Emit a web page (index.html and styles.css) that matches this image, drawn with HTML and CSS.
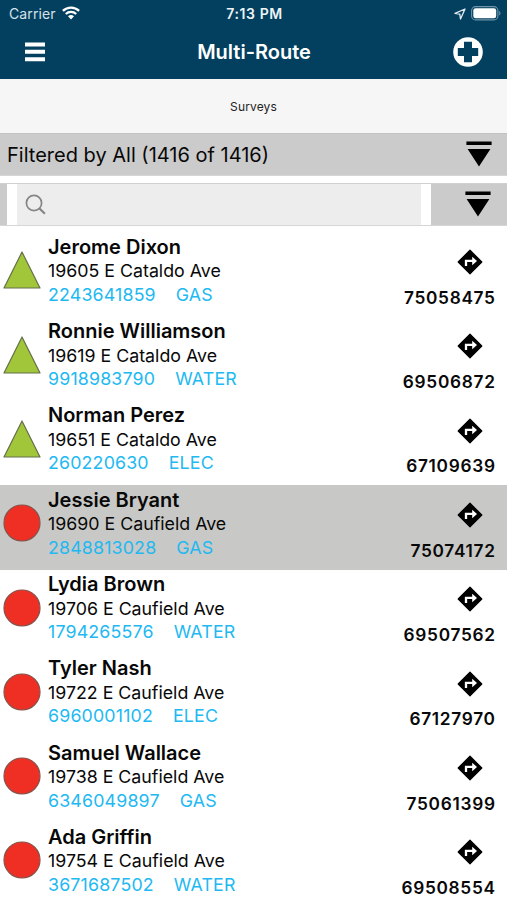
FILE: index.html
```
<!DOCTYPE html>
<html lang="en">
<head>
<meta charset="utf-8">
<title>Multi-Route</title>
<link rel="stylesheet" href="styles.css">
</head>
<body>
<svg class="defs" width="0" height="0" aria-hidden="true">
  <symbol id="triangle" viewBox="0 0 38 38"><path d="M19 1 37 37H1Z" fill="#a1c63a" stroke="#65704b" stroke-width="1.2" stroke-linejoin="round"/></symbol>
  <symbol id="circle" viewBox="0 0 38 38"><circle cx="19" cy="19" r="18" fill="#ef2f23" stroke="#87524c" stroke-width="1.2"/></symbol>
  <symbol id="route" viewBox="0 0 26 26"><path d="M13 1.2 24.800 13 13 24.800 1.200 13Z" fill="#000" stroke="#000" stroke-width="1.2" stroke-linejoin="round"/><path d="M9 17V11.800H16" fill="none" stroke="#fff" stroke-width="2.300"/><path d="M15.200 7.800 20 12l-4.800 4.200Z" fill="#fff"/></symbol>
  <symbol id="drop" viewBox="0 0 26 26"><path d="M.4.5h25.200v3.600H.4ZM1.600 8h22.800L13 25.400Z" fill="#000"/></symbol>
</svg>
<header class="top">
  <div class="status">
    <div class="carrier"><span>Carrier</span>
      <svg width="18" height="14" viewBox="0 0 18 14"><g fill="none" stroke="#fff" stroke-width="2.300"><path d="M.9 4.900a11.600 11.600 0 0 1 16.200 0"/><path d="M3.800 8a7.500 7.500 0 0 1 10.400 0"/></g><path d="M6 10.300a4.400 4.400 0 0 1 6 0L9 13.600Z" fill="#fff"/></svg>
    </div>
    <time>7:13 PM</time>
    <div class="power">
      <svg width="12" height="12" viewBox="0 0 12 12"><path d="M11 1 1 5.400l4.800.8.700 4.800Z" fill="none" stroke="#e4edf2" stroke-width="1.300" stroke-linejoin="round"/></svg>
      <svg width="30" height="15" viewBox="0 0 30 15"><rect x=".6" y=".6" width="26.300" height="13.300" rx="4" fill="none" stroke="#6f94a8" stroke-width="1.100"/><rect x="2.300" y="2.300" width="22.900" height="9.900" rx="2.300" fill="#fff"/><path d="M28.200 5v4.600c1.700-.7 1.700-3.900 0-4.600Z" fill="#6f94a8"/></svg>
    </div>
  </div>
  <div class="nav">
    <svg width="20" height="20" viewBox="0 0 20 20"><path d="M0 .5h20v4H0Zm0 7.300h20v4H0Zm0 7.400h20v4H0Z" fill="#fff"/></svg>
    <h1>Multi-Route</h1>
    <svg width="30" height="30" viewBox="0 0 30 30"><circle cx="15" cy="15" r="14.800" fill="#fff"/><path d="M11 4.800h8V11h6.200v8H19v6.200h-8V19H4.800v-8H11Z" fill="#03405f"/></svg>
  </div>
</header>
<div class="tab">Surveys</div>
<div class="filter"><span>Filtered by All (1416 of 1416)</span><svg width="26" height="26"><use href="#drop"/></svg></div>
<div class="search">
  <div class="field"><svg width="22" height="22" viewBox="0 0 22 22" fill="none" stroke="#858585"><circle cx="9" cy="9" r="7.600" stroke-width="1.700"/><path d="m14.500 14.500 5.400 5.200" stroke-width="2.200"/></svg></div>
  <svg width="26" height="26"><use href="#drop"/></svg>
</div>
<main>
  <article class="row"><svg class="mark"><use href="#triangle"/></svg><div class="info"><h2>Jerome Dixon</h2><p>19605 E Cataldo Ave</p><div class="meter"><span>2243641859</span><span>GAS</span></div></div><div class="side"><svg class="route"><use href="#route"/></svg><b>75058475</b></div></article>
  <article class="row"><svg class="mark"><use href="#triangle"/></svg><div class="info"><h2>Ronnie Williamson</h2><p>19619 E Cataldo Ave</p><div class="meter"><span>9918983790</span><span>WATER</span></div></div><div class="side"><svg class="route"><use href="#route"/></svg><b>69506872</b></div></article>
  <article class="row"><svg class="mark"><use href="#triangle"/></svg><div class="info"><h2>Norman Perez</h2><p>19651 E Cataldo Ave</p><div class="meter"><span>260220630</span><span>ELEC</span></div></div><div class="side"><svg class="route"><use href="#route"/></svg><b>67109639</b></div></article>
  <article class="row selected"><svg class="mark"><use href="#circle"/></svg><div class="info"><h2>Jessie Bryant</h2><p>19690 E Caufield Ave</p><div class="meter"><span>2848813028</span><span>GAS</span></div></div><div class="side"><svg class="route"><use href="#route"/></svg><b>75074172</b></div></article>
  <article class="row"><svg class="mark"><use href="#circle"/></svg><div class="info"><h2>Lydia Brown</h2><p>19706 E Caufield Ave</p><div class="meter"><span>1794265576</span><span>WATER</span></div></div><div class="side"><svg class="route"><use href="#route"/></svg><b>69507562</b></div></article>
  <article class="row"><svg class="mark"><use href="#circle"/></svg><div class="info"><h2>Tyler Nash</h2><p>19722 E Caufield Ave</p><div class="meter"><span>6960001102</span><span>ELEC</span></div></div><div class="side"><svg class="route"><use href="#route"/></svg><b>67127970</b></div></article>
  <article class="row"><svg class="mark"><use href="#circle"/></svg><div class="info"><h2>Samuel Wallace</h2><p>19738 E Caufield Ave</p><div class="meter"><span>6346049897</span><span>GAS</span></div></div><div class="side"><svg class="route"><use href="#route"/></svg><b>75061399</b></div></article>
  <article class="row"><svg class="mark"><use href="#circle"/></svg><div class="info"><h2>Ada Griffin</h2><p>19754 E Caufield Ave</p><div class="meter"><span>3671687502</span><span>WATER</span></div></div><div class="side"><svg class="route"><use href="#route"/></svg><b>69508554</b></div></article>
</main>
</body>
</html>
```
FILE: styles.css
```
* { box-sizing: border-box; }
body { margin: 0; height: 900px; overflow: hidden; background: #fff; color: #080808; font-family: Inter, "Liberation Sans", sans-serif; }
h1, h2, p { margin: 0; }
svg { display: block; flex: none; }
.defs { position: absolute; }
.top { height: 79px; background: #03405f; color: #fff; }
.status { height: 27px; display: grid; grid-template-columns: 1fr auto 1fr; align-items: center; padding: 0 6px 0 9px; }
.carrier { display: flex; align-items: center; gap: 6px; font-size: 14px; letter-spacing: .1px; color: #d6e2e9; }
.carrier svg { margin-top: -1px; }
.status time { margin-right: 1px; font-size: 14px; letter-spacing: .6px; font-weight: 600; color: #eef3f6; }
.power { display: flex; justify-content: flex-end; align-items: center; gap: 5px; }
.nav { height: 50px; display: grid; grid-template-columns: 1fr auto 1fr; align-items: center; padding: 0 24px 0 25px; }
.nav h1 { font-size: 20px; font-weight: 600; }
.nav svg:last-child { justify-self: end; }
.tab { height: 54px; display: flex; align-items: center; justify-content: center; background: #f6f6f6; font-size: 12px; letter-spacing: .15px; color: #222; }
.filter { height: 43px; display: flex; align-items: center; justify-content: space-between; padding: 0 15px 0 7px; background: #cbcbcb; border-top: 1px solid #c2c2c2; border-bottom: 1px solid #d6d6d6; font-size: 20px; }
.filter svg, .search > svg { margin-bottom: 2px; }
.search { height: 43px; margin-top: 7px; display: flex; align-items: center; justify-content: space-between; padding: 0 16px 0 7px; background: #cbcbcb; border-top: 1px solid #d0d0d0; border-bottom: 1px solid #d6d6d6; }
.field { width: 424px; height: 41px; display: flex; align-items: center; padding-left: 8px; background: #ededed; border: solid #fff; border-width: 0 10px; }
.row { height: 84.3px; display: grid; grid-template-columns: 45px 1fr auto; padding: 0 12px 0 3px; }
main { padding-top: 6.400px; }
.selected { background: #c8c8c6; }
.mark { width: 38px; height: 38px; margin-top: 19px; }
.info { padding-top: 2.500px; }
.info h2 { font-size: 20px; line-height: 25px; font-weight: 600; }
.info p { margin-top: -.5px; font-size: 17.800px; line-height: 24px; }
.meter { display: flex; gap: 20px; margin-top: -.5px; font-size: 17.800px; letter-spacing: .17px; line-height: 23px; color: #22b9f2; }
.side { display: flex; flex-direction: column; align-items: flex-end; padding-top: 16.800px; }
.route { width: 26px; height: 26px; margin-right: 12px; }
.side b { margin-top: 10.600px; margin-right: -.7px; font-size: 17.300px; letter-spacing: .7px; line-height: 23px; font-weight: 600; }
```
